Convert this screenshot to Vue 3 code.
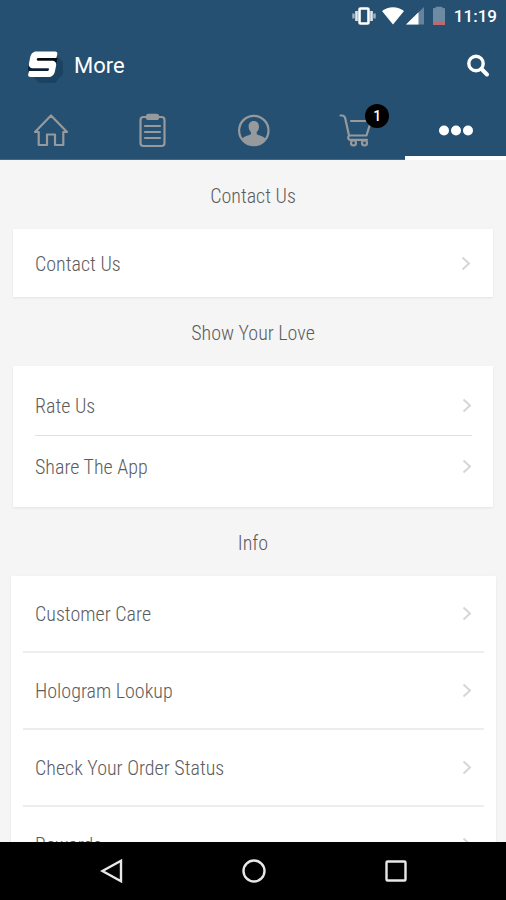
<script setup>
const tabs = ['Home', 'Orders', 'Account', 'Cart', 'More']
const sections = [
  { title: 'Contact Us', kind: 'single', items: ['Contact Us'] },
  { title: 'Show Your Love', kind: 'pair', items: ['Rate Us', 'Share The App'] },
  {
    title: 'Info',
    kind: 'wide',
    items: ['Customer Care', 'Hologram Lookup', 'Check Your Order Status', 'Rewards']
  }
]
</script>

<template>
  <div class="screen">
    <header class="top">
      <div class="status">
        <svg class="vibrate" viewBox="0 0 24 20" aria-hidden="true">
          <rect x="7.500" y="2.500" width="9" height="15" rx="1" fill="none" stroke="#fff" stroke-width="2.600" />
          <path d="M4.500 5v10M19.500 5v10" stroke="#dfe7ed" stroke-width="2.600" />
          <path d="M1.500 7.500v5M22.500 7.500v5" stroke="#9fb4c5" stroke-width="2.400" />
        </svg>
        <svg class="wifi" viewBox="0 0 24 20" aria-hidden="true">
          <path d="M12 18.500 1 5C4 2.500 8 1.200 12 1.200S20 2.500 23 5z" fill="#fff" />
        </svg>
        <svg class="signal" viewBox="0 0 18 20" aria-hidden="true">
          <path d="M18 1v17.500H0z" fill="#64839e" />
          <path d="M12.500 6.200v12.300H0z" fill="#fff" />
        </svg>
        <svg class="battery" viewBox="0 0 12 20" aria-hidden="true">
          <path d="M3 .8h6l.8 1.200H11a1 1 0 0 1 1 1V19H0V3a1 1 0 0 1 1-1h1.200z" fill="#6d8ba3" />
          <path d="M0 16h12v3H0z" fill="#b96b70" />
        </svg>
        <span class="clock">11:19</span>
      </div>

      <div class="bar">
        <svg class="logo" viewBox="0 0 40 40" aria-hidden="true">
          <path d="m8 29 24-20 7 7v12l-8 9H15z" fill="#1c4262" />
          <path d="M6 15h27l-4 13H5l-1-6z" fill="#0d1f33" />
          <path d="M12 12h21.500l-1.200 4H12z" fill="#050c14" />
          <path
            d="M12.500 5.500H31c1.800 0 2.700 1 2.300 2.700L32.300 12H14.500c-1 0-1.500.4-1.700 1.300-.2 1 .2 1.400 1.200 1.400h13.500c3.800 0 5.300 2 4.500 5.600l-1 4.700c-.9 4.200-3 6-7 6H6.500c-1.800 0-2.700-1-2.300-2.700l.9-3.300h18c1 0 1.600-.4 1.800-1.300.2-1-.2-1.400-1.200-1.400H9.500c-3.700 0-5.200-2-4.400-5.500l1-5c.8-4 2.700-6.300 6.400-6.300z"
            fill="#fff"
          />
        </svg>
        <h1 class="title">More</h1>
        <button class="search" aria-label="Search">
          <svg viewBox="0 0 24 24" aria-hidden="true">
            <circle cx="10" cy="9.500" r="7.200" fill="none" stroke="#fff" stroke-width="3.400" />
            <path d="m15.500 15 5.500 5.500" stroke="#fff" stroke-width="4" stroke-linecap="round" />
          </svg>
        </button>
      </div>

      <nav class="tabs">
        <a
          v-for="(tab, i) in tabs"
          :key="tab"
          href="#"
          class="tab"
          :class="{ active: tab === 'More' }"
          :aria-label="tab"
        >
          <svg v-if="i === 0" class="icon" viewBox="0 0 36 36" aria-hidden="true">
            <path d="M18 3.500 2 20h3.700v13H14V22.500h8V33h8.300V20H34z" />
          </svg>
          <svg v-else-if="i === 1" class="icon" viewBox="0 0 36 36" aria-hidden="true">
            <rect x="6.500" y="5" width="24" height="29" rx="3" />
            <rect x="13" y="2.800" width="11" height="4.200" rx="1.500" />
            <path d="M11 14h15M11 20h15M11 26h15" />
          </svg>
          <svg v-else-if="i === 2" class="icon" viewBox="0 0 36 36" aria-hidden="true">
            <circle cx="18.800" cy="18.500" r="14.700" />
            <path
              class="fill"
              d="M18.800 9c3.400 0 5.200 2.400 5.200 5.600 0 2.300-1 4.300-2.300 5.400v2.200c3 1.300 6.500 2 8.600 4.300-2.600 4-7 6.500-11.500 6.500s-8.900-2.500-11.500-6.500c2.100-2.300 5.600-3 8.600-4.300V20c-1.300-1.100-2.300-3.100-2.300-5.400C13.600 11.400 15.400 9 18.800 9z"
            />
          </svg>
          <span v-else-if="i === 3" class="cart">
            <svg class="icon" viewBox="0 0 36 36" aria-hidden="true">
              <path d="M4.500 3.500H6c2 0 2.800 1 3.200 2.800L13 23.500h17.500L35 9H15M13 23.500c-1.500 2.500-.8 4.300 1.500 4.300H31" />
              <circle cx="17.500" cy="31" r="2.500" />
              <circle cx="28.500" cy="31" r="2.500" />
            </svg>
            <span class="badge">1</span>
          </span>
          <svg v-else class="icon" viewBox="0 0 36 36" aria-hidden="true">
            <g class="dots">
              <circle cx="7" cy="18.500" r="5" />
              <circle cx="19" cy="18.500" r="5" />
              <circle cx="31" cy="18.500" r="5" />
            </g>
          </svg>
        </a>
      </nav>
    </header>

    <main class="content">
      <section v-for="section in sections" :key="section.title" :class="section.kind">
        <h2 class="heading">{{ section.title }}</h2>
        <ul class="card">
          <li v-for="item in section.items" :key="item" class="row">
            <a href="#" class="link">
              <span>{{ item }}</span>
              <svg class="chevron" viewBox="0 0 10 16" aria-hidden="true">
                <path d="m1.500 1.500 6.500 6-6.500 6" fill="none" stroke="#d6d6d6" stroke-width="2" />
              </svg>
            </a>
          </li>
        </ul>
      </section>
    </main>

    <nav class="system">
      <button aria-label="Back">
        <svg viewBox="0 0 24 24" aria-hidden="true"><path d="M21 1.800v20.400L2.500 12z" /></svg>
      </button>
      <button aria-label="Home">
        <svg viewBox="0 0 24 24" aria-hidden="true"><circle cx="12" cy="12" r="10.500" /></svg>
      </button>
      <button aria-label="Recent apps">
        <svg viewBox="0 0 24 24" aria-hidden="true"><rect x="2.500" y="2.500" width="19" height="19" rx="1" /></svg>
      </button>
    </nav>
  </div>
</template>

<style>
body {
  margin: 0;
}
</style>

<style scoped>
.screen {
  display: flex;
  flex-direction: column;
  height: 100vh;
  background: #f5f5f5;
  color: #5c5c5c;
  font-family: Roboto, "Liberation Sans", sans-serif;
}
.screen * {
  box-sizing: border-box;
}
button {
  display: flex;
  padding: 0;
  border: 0;
  background: none;
}
.top {
  flex: none;
  background: #265072;
  color: #fff;
}
.status {
  display: flex;
  justify-content: flex-end;
  align-items: center;
  height: 32px;
  padding-right: 9px;
}
.vibrate {
  width: 24px;
  height: 20px;
}
.wifi {
  width: 24px;
  height: 20px;
  margin-left: 5px;
}
.signal {
  width: 18px;
  height: 20px;
  margin-left: 1px;
}
.battery {
  width: 12px;
  height: 20px;
  margin-left: 9px;
}
.clock {
  margin-left: 9px;
  font-size: 17px;
  font-weight: 500;
  line-height: 20px;
}
.bar {
  display: flex;
  align-items: center;
  height: 68px;
  padding: 0 16px 0 24px;
}
.logo {
  width: 40px;
  height: 40px;
}
.title {
  flex: 1;
  margin: 0 0 0 10px;
  font-size: 22px;
  font-weight: 400;
  line-height: 28px;
}
.search svg {
  width: 24px;
  height: 24px;
}
.tabs {
  display: flex;
  height: 60px;
}
.tab {
  display: flex;
  flex: 1;
  align-items: center;
  justify-content: center;
  border-bottom: 1px solid #45677f;
}
.tab.active {
  padding-top: 3px;
  border-bottom: 4px solid #fff;
}
.icon {
  display: block;
  width: 36px;
  height: 36px;
  fill: none;
  stroke: #969a9d;
  stroke-width: 2.2;
  stroke-linejoin: round;
  stroke-linecap: round;
}
.fill {
  fill: #969a9d;
  stroke: none;
}
.dots {
  fill: #fff;
  stroke: none;
}
.cart {
  position: relative;
}
.badge {
  position: absolute;
  top: -8px;
  right: -17px;
  width: 24px;
  height: 24px;
  border-radius: 50%;
  background: #000;
  color: #fff;
  font-size: 14px;
  font-weight: 500;
  line-height: 24px;
  text-align: center;
}
.content {
  flex: 1;
  min-height: 0;
  overflow: hidden;
  font-family: "Roboto Condensed", "Liberation Sans Narrow", Roboto, sans-serif;
  font-size: 20px;
  font-weight: 300;
  line-height: 24px;
}
.heading {
  display: flex;
  align-items: center;
  justify-content: center;
  height: 69px;
  margin: 0;
  padding-top: 2px;
  font-size: inherit;
  font-weight: inherit;
}
.card {
  margin: 0 13px;
  padding: 0 22px;
  background: #fff;
  box-shadow: 0 1px 2px #e4e4e4;
  list-style: none;
}
.row {
  height: 68px;
}
.link {
  display: flex;
  align-items: center;
  justify-content: space-between;
  height: 100%;
  padding-top: 2px;
  color: inherit;
  text-decoration: none;
}
.chevron {
  width: 10px;
  height: 16px;
}
.pair .card {
  padding: 8px 21px 11px 22px;
}
.pair .row {
  height: 61px;
}
.pair .row + .row {
  border-top: 1px solid #e0e0e0;
}
.wide .card {
  margin: 0 10px 0 11px;
  padding: 0 12px;
}
.wide .row {
  height: 77px;
  border-bottom: 2px solid #ededed;
}
.wide .link {
  padding: 1px 12px 0;
}
.system {
  display: flex;
  flex: none;
  align-items: center;
  justify-content: center;
  gap: 118px;
  height: 58px;
  padding-left: 2px;
  background: #000;
}
.system svg {
  width: 24px;
  height: 24px;
  fill: none;
  stroke: #e8e8e8;
  stroke-width: 2.4;
}
</style>
